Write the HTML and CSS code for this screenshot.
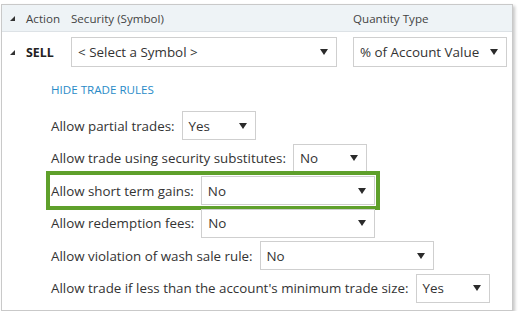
FILE: index.html
```html
<!DOCTYPE html>
<html lang="en">
<head>
  <meta charset="UTF-8">
  <meta name="viewport" content="width=device-width, initial-scale=1.0">
  <title>Trade Rules</title>
  <link rel="stylesheet" href="styles.css">
</head>
<body>
  <div class="card">
    <div class="head">
      <svg class="corner" width="5" height="5" viewBox="0 0 5 5"><polygon points="5,0 5,5 0,5"/></svg>
      <span>Action</span>
      <span>Security (Symbol)</span>
      <span>Quantity Type</span>
    </div>

    <div class="trade">
      <svg class="corner" width="5" height="5" viewBox="0 0 5 5"><polygon points="5,0 5,5 0,5"/></svg>
      <span class="action">SELL</span>
      <div class="select symbol">
        <span>&lt; Select a Symbol &gt;</span>
        <svg class="arrow" width="8" height="6" viewBox="0 0 8 6"><polygon points="0,0 8,0 4,6"/></svg>
      </div>
      <div class="select qty">
        <span>% of Account Value</span>
        <svg class="arrow" width="8" height="6" viewBox="0 0 8 6"><polygon points="0,0 8,0 4,6"/></svg>
      </div>
    </div>

    <div class="rules">
      <a class="toggle" href="#">HIDE TRADE RULES</a>
      <div class="rule-list">
        <div class="rule">
          <label>Allow partial trades:</label>
          <div class="select small">
            <span>Yes</span>
            <svg class="arrow" width="8" height="6" viewBox="0 0 8 6"><polygon points="0,0 8,0 4,6"/></svg>
          </div>
        </div>
        <div class="rule">
          <label>Allow trade using security substitutes:</label>
          <div class="select small">
            <span>No</span>
            <svg class="arrow" width="8" height="6" viewBox="0 0 8 6"><polygon points="0,0 8,0 4,6"/></svg>
          </div>
        </div>
        <div class="rule highlight">
          <label>Allow short term gains:</label>
          <div class="select wide">
            <span>No</span>
            <svg class="arrow" width="8" height="6" viewBox="0 0 8 6"><polygon points="0,0 8,0 4,6"/></svg>
          </div>
        </div>
        <div class="rule">
          <label>Allow redemption fees:</label>
          <div class="select wide">
            <span>No</span>
            <svg class="arrow" width="8" height="6" viewBox="0 0 8 6"><polygon points="0,0 8,0 4,6"/></svg>
          </div>
        </div>
        <div class="rule">
          <label>Allow violation of wash sale rule:</label>
          <div class="select wide">
            <span>No</span>
            <svg class="arrow" width="8" height="6" viewBox="0 0 8 6"><polygon points="0,0 8,0 4,6"/></svg>
          </div>
        </div>
        <div class="rule">
          <label>Allow trade if less than the account's minimum trade size:</label>
          <div class="select small">
            <span>Yes</span>
            <svg class="arrow" width="8" height="6" viewBox="0 0 8 6"><polygon points="0,0 8,0 4,6"/></svg>
          </div>
        </div>
      </div>
    </div>
  </div>
</body>
</html>
```

FILE: styles.css
```css
body {
  margin: 0;
  padding: 4px 0 0 1px;
  font-family: "Open Sans", Arial, sans-serif;
  color: #333;
  background: #fff;
}
.card {
  width: 510px;
  height: 305px;
  border: 1px solid #c9c9c9;
  box-shadow: 2px 2px 3px rgba(0, 0, 0, 0.22);
  background: #fff;
}
.corner {
  fill: #333;
}
.head {
  display: grid;
  grid-template-columns: 16px 45px 282px auto;
  align-items: center;
  height: 26px;
  padding-left: 8px;
  background: #eef3f6;
  border-bottom: 1px solid #dde2e6;
  font-size: 11.6px;
  color: #444;
}
.trade {
  display: grid;
  grid-template-columns: 16px 45px 282px auto;
  align-items: center;
  margin-top: 5px;
  padding-left: 8px;
}
.action {
  font-weight: bold;
  font-size: 12.4px;
  color: #222;
}
.select {
  display: flex;
  align-items: center;
  justify-content: space-between;
  box-sizing: border-box;
  height: 29px;
  padding: 0 8px 0 6px;
  border: 1px solid #cfcfcf;
  background: #fff;
  font-size: 13.4px;
  color: #333;
}
.arrow {
  fill: #2b2b2b;
}
.symbol {
  width: 266px;
  height: 30px;
}
.qty {
  width: 154px;
  height: 30px;
}
.small {
  width: 74px;
}
.wide {
  width: 174px;
}
.rules {
  padding-left: 49px;
}
.toggle {
  display: block;
  margin-top: 16px;
  font-size: 11.6px;
  line-height: 14px;
  color: #2a8bc8;
  text-decoration: none;
}
.rule-list {
  display: flex;
  flex-direction: column;
  gap: 3.6px;
  margin-top: 14px;
}
.rule {
  display: flex;
  align-items: center;
  gap: 7px;
  width: fit-content;
  font-size: 13.35px;
}
.highlight {
  outline: 4px solid #5fa02b;
  outline-offset: 1px;
}
```
